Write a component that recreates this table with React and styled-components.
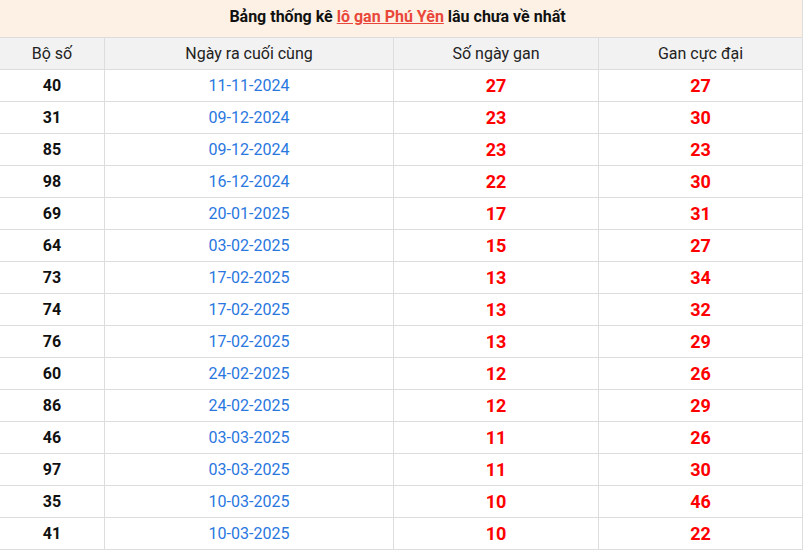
import React from "react";
import styled, { createGlobalStyle } from "styled-components";

const Global = createGlobalStyle`
  html, body { margin: 0; padding: 0; background: #fff; }
  body { font-family: Roboto, "Noto Sans", Arial, sans-serif; }
`;

const Wrap = styled.div`
  width: 804px;
  height: 550px;
  overflow: hidden;
`;

const Table = styled.table`
  width: 803px;
  border-collapse: collapse;
  table-layout: fixed;
  margin-left: -1px;
  border: 1px solid #ddd;
  border-top: none;
  font-family: Roboto, Arial, sans-serif;
`;

const Caption = styled.th`
  height: 37px;
  box-sizing: border-box;
  padding: 0 7px 3px 0;
  background: #fdf1e6;
  font-size: 16px;
  font-weight: 700;
  color: #111;
  text-align: center;
  border-bottom: 1px solid #ddd;
`;

const Link = styled.a`
  color: #e9473a;
  text-decoration: underline;
`;

const HeadCell = styled.th`
  height: 31px;
  padding: 0;
  background: #f2f2f2;
  font-weight: 400;
  font-size: 16px;
  color: #222;
  text-align: center;
  border: 1px solid #ddd;
`;

const Cell = styled.td`
  height: 31px;
  padding: 0;
  text-align: center;
  border: 1px solid #ddd;
  font-size: ${(p) => (p.$kind === "red" ? "18px" : "16px")};
  font-weight: ${(p) => (p.$kind === "date" ? 400 : 700)};
  color: ${(p) =>
    p.$kind === "red" ? "#ff0000" : p.$kind === "date" ? "#2a77e0" : "#111"};
`;

const rows = [
  ["40", "11-11-2024", "27", "27"],
  ["31", "09-12-2024", "23", "30"],
  ["85", "09-12-2024", "23", "23"],
  ["98", "16-12-2024", "22", "30"],
  ["69", "20-01-2025", "17", "31"],
  ["64", "03-02-2025", "15", "27"],
  ["73", "17-02-2025", "13", "34"],
  ["74", "17-02-2025", "13", "32"],
  ["76", "17-02-2025", "13", "29"],
  ["60", "24-02-2025", "12", "26"],
  ["86", "24-02-2025", "12", "29"],
  ["46", "03-03-2025", "11", "26"],
  ["97", "03-03-2025", "11", "30"],
  ["35", "10-03-2025", "10", "46"],
  ["41", "10-03-2025", "10", "22"],
];

export default function App() {
  return (
    <Wrap>
      <Global />
      <Table>
        <colgroup>
          <col style={{ width: 105 }} />
          <col style={{ width: 289 }} />
          <col style={{ width: 205 }} />
          <col style={{ width: 204 }} />
        </colgroup>
        <thead>
          <tr>
            <Caption colSpan={4}>
              Bảng thống kê <Link href="#">lô gan Phú Yên</Link> lâu chưa về nhất
            </Caption>
          </tr>
          <tr>
            <HeadCell>Bộ số</HeadCell>
            <HeadCell>Ngày ra cuối cùng</HeadCell>
            <HeadCell>Số ngày gan</HeadCell>
            <HeadCell>Gan cực đại</HeadCell>
          </tr>
        </thead>
        <tbody>
          {rows.map((r) => (
            <tr key={r[0]}>
              <Cell $kind="num">{r[0]}</Cell>
              <Cell $kind="date">{r[1]}</Cell>
              <Cell $kind="red">{r[2]}</Cell>
              <Cell $kind="red">{r[3]}</Cell>
            </tr>
          ))}
        </tbody>
      </Table>
    </Wrap>
  );
}
